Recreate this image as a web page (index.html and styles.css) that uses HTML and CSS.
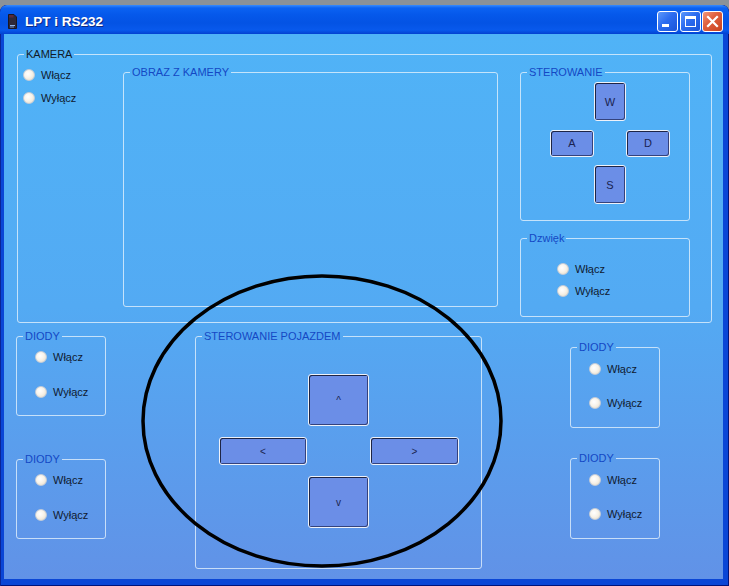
FILE: index.html
```html
<!DOCTYPE html>
<html lang="pl">
<head>
<meta charset="utf-8">
<title>LPT i RS232</title>
<link rel="stylesheet" href="styles.css">
</head>
<body>
<div class="window">
  <div class="titlebar">
    <svg class="app-icon" width="9" height="15" viewBox="0 0 9 15">
      <path d="M0.5 0.5 H6 L8.5 3 V14.5 H0.5 Z" fill="#2e2838" stroke="#1a1622"/>
      <path d="M1 1 H5.5 V3.5 H1 Z" fill="#5a2a3a"/>
      <rect x="2" y="11" width="5" height="1" fill="#8fb4e8"/>
      <rect x="2" y="12.5" width="4" height="1" fill="#6f90c8"/>
    </svg>
    <span class="title">LPT i RS232</span>
    <div class="caption-buttons">
      <span class="cbtn cbtn-blue">
        <svg width="19" height="19" viewBox="0 0 19 19"><rect x="4" y="12" width="7" height="3" fill="#fff"/></svg>
      </span>
      <span class="cbtn cbtn-blue">
        <svg width="19" height="19" viewBox="0 0 19 19"><rect x="4.5" y="4.5" width="10" height="10" fill="none" stroke="#fff"/><rect x="4" y="4" width="11" height="3" fill="#fff"/></svg>
      </span>
      <span class="cbtn cbtn-red">
        <svg width="19" height="19" viewBox="0 0 19 19"><path d="M5 5 L14 14 M14 5 L5 14" stroke="#fff" stroke-width="2.2" stroke-linecap="square"/></svg>
      </span>
    </div>
  </div>
  <div class="frame">
    <div class="client">
      <fieldset class="group outer">
        <legend class="legend-dark">KAMERA</legend>
        <div class="outer-body">
          <div class="cam-col">
            <label class="radio-row"><span class="radio"></span>Włącz</label>
            <label class="radio-row"><span class="radio"></span>Wyłącz</label>
          </div>
          <fieldset class="group obraz"><legend>OBRAZ Z KAMERY</legend></fieldset>
          <div class="side-col">
            <fieldset class="group steer">
              <legend>STEROWANIE</legend>
              <div class="steer-pad">
                <button class="key k-up">W</button>
                <button class="key k-left">A</button>
                <button class="key k-right">D</button>
                <button class="key k-down">S</button>
              </div>
            </fieldset>
            <fieldset class="group sound">
              <legend>Dzwięk</legend>
              <div class="sound-body">
                <label class="radio-row"><span class="radio"></span>Włącz</label>
                <label class="radio-row"><span class="radio"></span>Wyłącz</label>
              </div>
            </fieldset>
          </div>
        </div>
      </fieldset>

      <div class="lower">
        <div class="diody-col">
          <fieldset class="group diody">
            <legend>DIODY</legend>
            <div class="diody-body">
              <label class="radio-row"><span class="radio"></span>Włącz</label>
              <label class="radio-row"><span class="radio"></span>Wyłącz</label>
            </div>
          </fieldset>
          <fieldset class="group diody diody-second-left">
            <legend>DIODY</legend>
            <div class="diody-body">
              <label class="radio-row"><span class="radio"></span>Włącz</label>
              <label class="radio-row"><span class="radio"></span>Wyłącz</label>
            </div>
          </fieldset>
        </div>

        <fieldset class="group pojazd">
          <legend>STEROWANIE POJAZDEM</legend>
          <div class="drive-pad">
            <button class="key key-small k-up">^</button>
            <button class="key key-small k-left">&lt;</button>
            <button class="key key-small k-right">&gt;</button>
            <button class="key key-small k-down">v</button>
          </div>
        </fieldset>

        <div class="diody-col diody-col-right">
          <fieldset class="group diody diody-r">
            <legend>DIODY</legend>
            <div class="diody-body">
              <label class="radio-row"><span class="radio"></span>Włącz</label>
              <label class="radio-row"><span class="radio"></span>Wyłącz</label>
            </div>
          </fieldset>
          <fieldset class="group diody diody-r diody-second-right">
            <legend>DIODY</legend>
            <div class="diody-body">
              <label class="radio-row"><span class="radio"></span>Włącz</label>
              <label class="radio-row"><span class="radio"></span>Wyłącz</label>
            </div>
          </fieldset>
        </div>
      </div>

      <svg class="circle-mark" width="719" height="545" viewBox="0 0 719 545">
        <ellipse cx="318" cy="387" rx="179" ry="145" fill="none" stroke="#000" stroke-width="3.5"/>
      </svg>
    </div>
  </div>
</div>
</body>
</html>
```

FILE: styles.css
```css
* { box-sizing: border-box; }
html, body { margin: 0; padding: 0; }
body {
  width: 729px;
  height: 586px;
  overflow: hidden;
  background: #8b9298;
  font-family: "Liberation Sans", Arial, sans-serif;
}

.window {
  margin-top: 5px;
  height: 581px;
  border-radius: 7px 7px 0 0;
  background: #0a46d6;
  display: flex;
  flex-direction: column;
  overflow: hidden;
  box-shadow: inset 1px 0 0 #0a2596, inset -1px 0 0 #00137a, inset 0 -1px 0 #00137a;
}

.titlebar {
  height: 29px;
  flex: none;
  display: flex;
  align-items: center;
  padding: 4px 6px 0 8px;
  border-radius: 7px 7px 0 0;
  background: linear-gradient(to bottom, #3a8cfc 0px, #0b62f2 3px, #0558ea 10px, #0453e4 18px, #0859ec 25px, #0448d8 28px, #0340cf 29px);
}

.app-icon { flex: none; display: block; }

.title {
  margin-left: 8px;
  color: #fff;
  font-weight: bold;
  font-size: 13.5px;
  letter-spacing: 0;
  text-shadow: 1px 1px 0 #0b2a86;
}

.caption-buttons {
  margin-left: auto;
  display: flex;
  gap: 1.5px;
}

.cbtn {
  width: 21px;
  height: 21px;
  border: 1px solid #fff;
  border-radius: 3px;
  display: flex;
  align-items: center;
  justify-content: center;
}
.cbtn svg { display: block; }
.cbtn-blue {
  background: linear-gradient(135deg, #5c98fb 0%, #2c6cf0 45%, #1a54d8 100%);
}
.cbtn-red {
  background: linear-gradient(135deg, #f0997a 0%, #e06040 40%, #c8421e 100%);
}

.frame {
  flex: 1;
  display: flex;
  padding: 0 6px 7px 4px;
}

.client {
  flex: 1;
  position: relative;
  padding: 14px 0 0 12px;
  background: linear-gradient(to bottom, #50b3f7 0%, #53aaf3 50%, #6192e7 100%);
}

/* group boxes */
.group {
  margin: 0;
  padding: 0;
  min-width: 0;
  border: 1px solid rgba(230, 242, 253, 0.78);
  border-radius: 3px;
}
.group legend {
  margin-left: 6px;
  padding: 0 2px;
  font-size: 11px;
  line-height: 13px;
  color: #1448c4;
}
.group legend.legend-dark { color: #111a28; }

.outer {
  width: 695px;
  height: 275px;
  margin-left: 1px;
}
.outer-body {
  display: flex;
  align-items: flex-start;
  padding: 5px 0 0 5px;
}
.cam-col {
  width: 100px;
  flex: none;
  display: flex;
  flex-direction: column;
  gap: 9px;
  padding-top: 2px;
}
.obraz {
  width: 375px;
  height: 241px;
  flex: none;
}
.side-col {
  margin-left: 22px;
  width: 170px;
  flex: none;
  display: flex;
  flex-direction: column;
  gap: 11px;
}
.steer { height: 155px; }
.sound { height: 85px; }

.sound-body {
  padding: 17px 0 0 36px;
  display: flex;
  flex-direction: column;
  gap: 8px;
}

/* radios */
.radio-row {
  display: flex;
  align-items: center;
  gap: 6px;
  height: 14px;
  font-size: 11px;
  color: #0f1a30;
  white-space: nowrap;
}
.radio {
  flex: none;
  width: 12px;
  height: 12px;
  border-radius: 50%;
  border: 1px solid #c4ccd8;
  background: radial-gradient(circle at 40% 38%, #ffffff 0%, #f8f3ea 45%, #e4d9c4 100%);
}

/* keys */
.steer-pad {
  display: grid;
  grid-template-columns: 44px 32px 44px;
  grid-template-rows: 39px 27px 39px;
  row-gap: 8.5px;
  padding: 3px 0 0 29px;
}
.drive-pad {
  display: grid;
  grid-template-columns: 88px 61px 89px;
  grid-template-rows: 52px 28px 52px;
  column-gap: 1px;
  row-gap: 11px;
  padding: 31px 0 0 23px;
}
.k-up { grid-column: 2; grid-row: 1; }
.k-left { grid-column: 1; grid-row: 2; }
.k-right { grid-column: 3; grid-row: 2; }
.k-down { grid-column: 2; grid-row: 3; }

.key {
  margin: 0;
  padding: 0;
  font-family: "Liberation Sans", Arial, sans-serif;
  font-size: 11px;
  color: #1a2350;
  background: #6b8ee7;
  border: 1px solid #eef2fa;
  border-radius: 3px;
  box-shadow: inset 1px 1px 0 #1e2546, inset -1px -1px 0 #34427c;
}
.key-small { font-size: 10px; }

/* lower row */
.lower {
  margin-top: 7px;
  display: flex;
  align-items: flex-start;
}
.diody-col {
  width: 90px;
  flex: none;
  display: flex;
  flex-direction: column;
}
.diody { height: 86px; }
.diody-second-left { margin-top: 37px; }
.diody-col-right { margin-left: 88px; padding-top: 11px; }
.diody-r { height: 87px; }
.diody-second-right { margin-top: 24px; }

.diody-body {
  padding: 7px 0 0 18px;
  display: flex;
  flex-direction: column;
  gap: 21px;
}
.diody-r .diody-body { padding-top: 8px; gap: 20px; }

.pojazd {
  width: 287px;
  height: 239px;
  flex: none;
  margin-left: 89px;
}

.circle-mark {
  position: absolute;
  left: 0;
  top: 0;
  pointer-events: none;
}
```
